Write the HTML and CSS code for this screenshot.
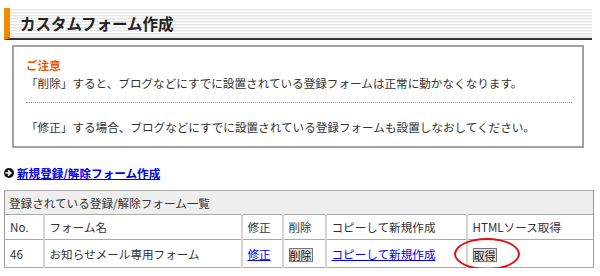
FILE: index.html
```
<!DOCTYPE html>
<html lang="ja">
<head>
<meta charset="utf-8">
<link rel="stylesheet" href="styles.css">
</head>
<body>
<div class="page">
  <h1 class="title">カスタムフォーム作成</h1>
  <div class="notice">
    <p class="notice-head">ご注意</p>
    <p class="notice-line">「削除」すると、ブログなどにすでに設置されている登録フォームは正常に動かなくなります。</p>
    <hr class="notice-sep">
    <p class="notice-line">「修正」する場合、ブログなどにすでに設置されている登録フォームも設置しなおしてください。</p>
  </div>
  <p class="new-link"><svg class="arrow-icon" width="10" height="10" viewBox="0 0 10 10"><circle cx="5" cy="5" r="5" fill="#111"/><path d="M2.2 5 H6.2 M4.6 2.9 L6.8 5 L4.6 7.1" stroke="#fff" stroke-width="1.6" fill="none" stroke-linecap="square"/></svg><a href="#" class="bold-link">新規登録/解除フォーム作成</a></p>
  <table class="forms">
    <colgroup>
      <col class="c-no"><col class="c-name"><col class="c-edit"><col class="c-del"><col class="c-copy"><col class="c-html">
    </colgroup>
    <tr class="caption-row"><td colspan="6">登録されている登録/解除フォーム一覧</td></tr>
    <tr class="head-row">
      <td>No.</td><td>フォーム名</td><td>修正</td><td>削除</td><td>コピーして新規作成</td><td>HTMLソース取得</td>
    </tr>
    <tr class="data-row">
      <td>46</td><td>お知らせメール専用フォーム</td><td><a href="#">修正</a></td><td><button class="btn">削除</button></td><td><a href="#">コピーして新規作成</a></td><td class="html-cell"><button class="btn btn-get">取得</button><span class="ring"></span></td>
    </tr>
  </table>
</div>
</body>
</html>
```

FILE: styles.css
```
html, body {
  margin: 0;
  padding: 0;
  background: #fff;
}
body {
  font-family: "Noto Sans CJK JP", "Noto Sans", sans-serif;
  font-size: 11.6px;
  color: #333;
}
.page {
  padding: 8px 8px 0 4px;
}
.title {
  margin: 0;
  height: 30px;
  line-height: 30px;
  font-size: 15.5px;
  font-weight: bold;
  color: #222;
  padding-left: 10px;
  border-left: 6px solid #f08c00;
  border-bottom: 2px solid #333;
  background: repeating-linear-gradient(to bottom, #ffffff 0, #ffffff 1px, #e4e4e4 1px, #e4e4e4 2px, #f4f4f4 2px, #f4f4f4 3px);
}
.notice {
  margin: 5px 8px 0 8px;
  border: 2px solid #a0a0a0;
  padding: 9px 10px 10px 12px;
}
.notice p {
  margin: 0;
  line-height: 18px;
}
.notice-head {
  color: #f05000;
  font-weight: bold;
}
.notice-sep {
  margin: 10px 0 15px 0;
  border: 0;
  border-top: 1px dotted #999;
  height: 0;
}
.new-link {
  margin: 16px 0 8px 0;
  line-height: 18px;
  display: flex;
  align-items: center;
  gap: 3px;
}
.arrow-icon {
  display: block;
}
a {
  color: #0000ee;
  text-decoration: underline;
}
.bold-link {
  font-weight: bold;
}
.forms {
  width: 589px;
  border-collapse: collapse;
  border: 1px solid #999;
  table-layout: fixed;
}
.c-no { width: 39px; }
.c-name { width: 198px; }
.c-edit { width: 41px; }
.c-del { width: 43px; }
.c-copy { width: 141px; }
.c-html { width: 127px; }
.forms td {
  border-top: 1px solid #aaa;
  border-bottom: 1px solid #aaa;
  border-left: 2px solid #d4d4d4;
  border-right: 2px solid #d4d4d4;
  padding: 0 0 0 5px;
  line-height: 16px;
  white-space: nowrap;
}
.forms td:first-child { border-left: 1px solid #999; }
.forms td:last-child { border-right: 1px solid #999; }
.caption-row td {
  background: #eeeeee;
  height: 23px;
  padding-left: 4px;
}
.head-row td {
  height: 24px;
}
.data-row td {
  height: 27px;
}
.btn {
  font-family: "Noto Sans CJK JP", sans-serif;
  font-size: 11px;
  line-height: 12px;
  padding: 0 0;
  margin: 0;
  background: #e0e0e0;
  color: #111;
  border: 1px solid #777;
  border-radius: 0;
  vertical-align: middle;
}
.html-cell {
  position: relative;
}
.ring {
  position: absolute;
  left: -14px;
  top: -2px;
  width: 62px;
  height: 28px;
  border: 2px solid #e01010;
  border-radius: 50%;
}
```
